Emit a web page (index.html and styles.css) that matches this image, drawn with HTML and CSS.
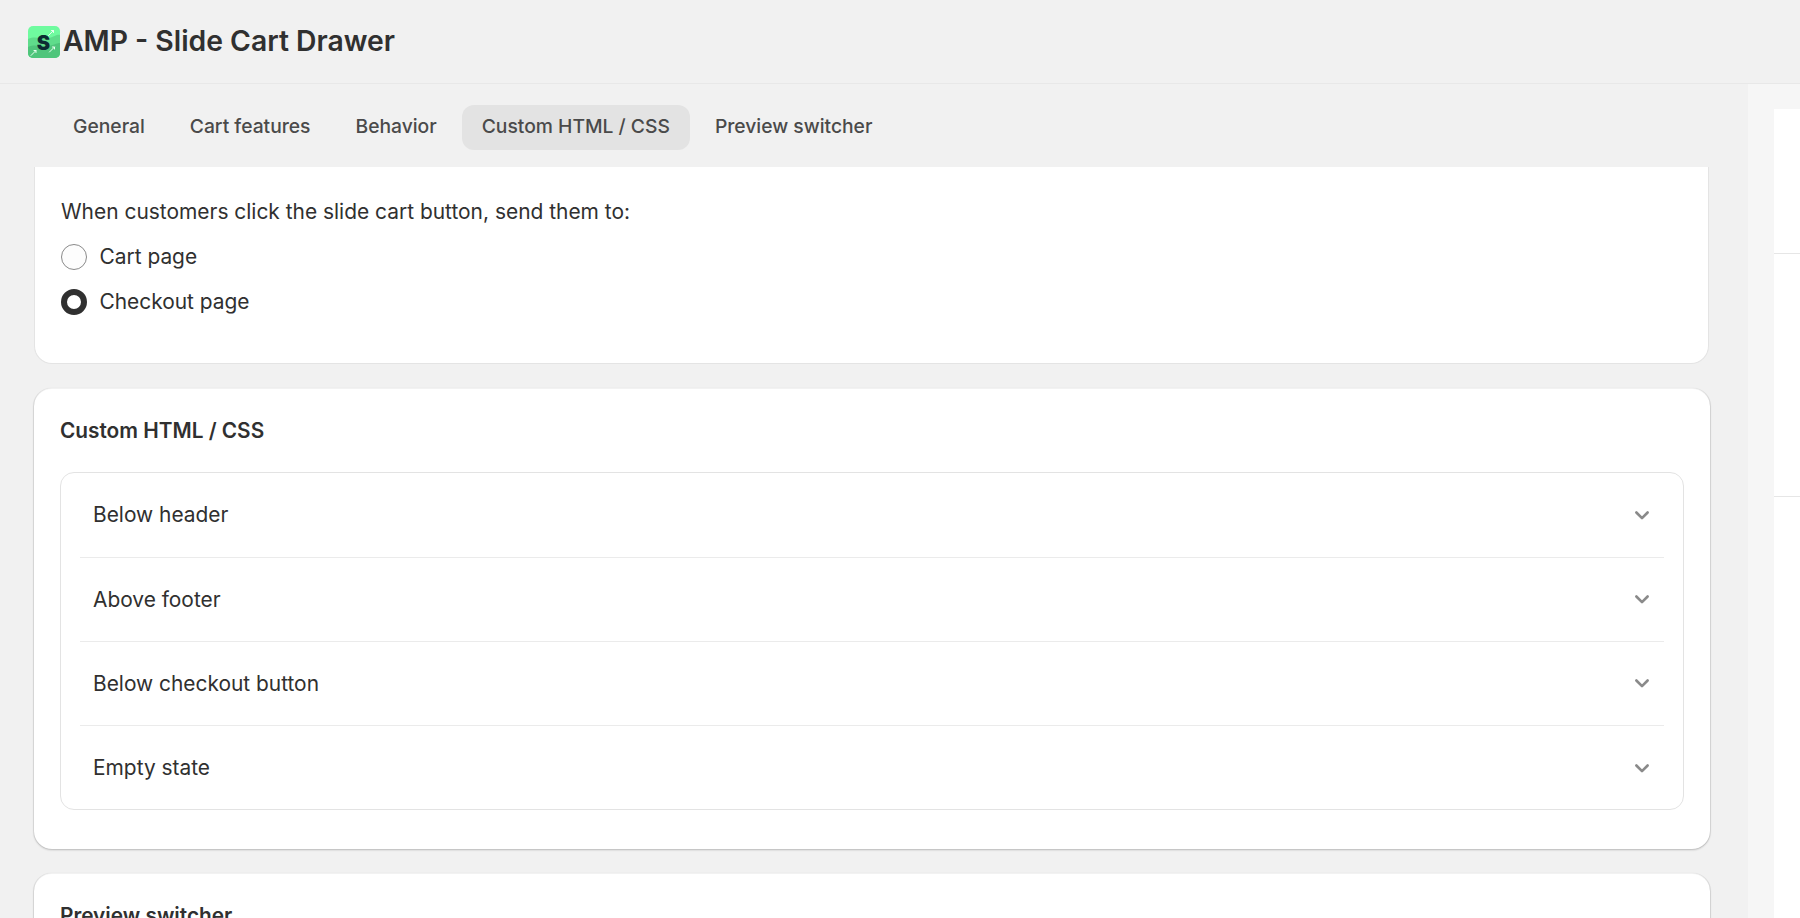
FILE: index.html
```html
<!DOCTYPE html>
<html lang="en">
<head>
<meta charset="utf-8">
<title>AMP - Slide Cart Drawer</title>
<link rel="stylesheet" href="styles.css">
</head>
<body>
<div class="app">
  <header class="topbar">
    <svg class="logo" viewBox="0 0 32 32" aria-hidden="true">
      <defs><clipPath id="lc"><rect width="32" height="32" rx="5"/></clipPath></defs>
      <g clip-path="url(#lc)">
        <rect width="32" height="32" fill="#6ffb9f"/>
        <path d="M0 13 C8 9 14 14 21 12 S29 8 32 9 V32 H0Z" fill="#5fdc8b"/>
        <path d="M0 21 C8 17 14 22 21 20 S29 17 32 17 V32 H0Z" fill="#4fc57b"/>
        <g stroke="#e9fff0" stroke-width="1" fill="none" stroke-linecap="round">
          <path d="M20.5 9.5 L25.5 4.5 M23.5 4.5 H25.5 V6.5"/>
          <path d="M3 29.5 L8 24.5 M6 24.5 H8 V26.5"/>
          <path d="M21.5 26 L26.5 21 M24.5 21 H26.5 V23"/>
        </g>
      </g>
      <text class="logo-s" x="15.5" y="23.5" text-anchor="middle">S</text>
    </svg>
    <h1 class="title">AMP - Slide Cart Drawer</h1>
  </header>
  <div class="body-row">
    <main class="content">
      <nav class="tabs">
        <a class="tab">General</a>
        <a class="tab">Cart features</a>
        <a class="tab">Behavior</a>
        <a class="tab tab-active">Custom HTML / CSS</a>
        <a class="tab">Preview switcher</a>
      </nav>
      <div class="scroll">
        <section class="card card-cut">
          <p class="prompt">When customers click the slide cart button, send them to:</p>
          <label class="radio-row"><span class="radio"></span>Cart page</label>
          <label class="radio-row"><span class="radio radio-on"></span>Checkout page</label>
        </section>
        <section class="card card-main card-html">
          <h2 class="card-title">Custom HTML / CSS</h2>
          <div class="accordion">
            <div class="acc-row"><span>Below header</span><svg class="chev" viewBox="0 0 16 16"><path d="M3.5 6 8 10.5 12.5 6"/></svg></div>
            <div class="acc-row"><span>Above footer</span><svg class="chev" viewBox="0 0 16 16"><path d="M3.5 6 8 10.5 12.5 6"/></svg></div>
            <div class="acc-row"><span>Below checkout button</span><svg class="chev" viewBox="0 0 16 16"><path d="M3.5 6 8 10.5 12.5 6"/></svg></div>
            <div class="acc-row"><span>Empty state</span><svg class="chev" viewBox="0 0 16 16"><path d="M3.5 6 8 10.5 12.5 6"/></svg></div>
          </div>
        </section>
        <section class="card card-main card-preview">
          <h2 class="card-title">Preview switcher</h2>
        </section>
      </div>
    </main>
    <aside class="side">
      <div class="side-panel">
        <div class="side-block side-a"></div>
        <div class="side-block side-b"></div>
        <div class="side-block"></div>
      </div>
    </aside>
  </div>
</div>
</body>
</html>
```
FILE: styles.css
```css
* { box-sizing: border-box; }
html, body { height: 100%; margin: 0; }
body {
  font-family: Inter, "Liberation Sans", sans-serif;
  color: #303030;
  background: #f1f1f1;
  overflow: hidden;
}
.app { display: flex; flex-direction: column; height: 918px; }
.topbar {
  height: 84px;
  flex: none;
  display: flex;
  align-items: center;
  gap: 3px;
  padding: 0 0 0 28px;
  border-bottom: 1px solid #e8e8e8;
  background: #f1f1f1;
}
.logo { width: 32px; height: 32px; flex: none; display: block; }
.logo-s { font: 900 20px Inter, sans-serif; fill: #0c2b33; }
.title { margin: 0 0 2px; font-size: 28.3px; line-height: 36px; font-weight: 600; color: #303030; }
.body-row { flex: 1; display: flex; min-height: 0; }
.content { width: 1748px; flex: none; display: flex; flex-direction: column; min-height: 0; }
.tabs { flex: none; height: 83px; display: flex; gap: 5px; align-items: flex-start; padding: 21px 0 0 53px; }
.tab {
  height: 45px;
  padding: 0 20px 4px;
  display: flex;
  align-items: center;
  border-radius: 12px;
  font-size: 19.27px;
  font-weight: 500;
  color: #4a4a4a;
}
.tab-active { background: #e3e3e3; }
.scroll { flex: 1; min-height: 0; overflow: hidden; padding: 0 38px 0 34px; display: flex; flex-direction: column; gap: 24px; }
.card { background: #fff; flex: none; }
.card-cut {
  height: 197px;
  margin: 0 1px 0 0;
  padding: 33px 26px 0;
  border-radius: 0 0 18px 18px;
  border: 1px solid #e4e4e4;
  border-top: none;
}
.prompt { margin: 0 0 20px; font-size: 20.93px; line-height: 24px; color: #303030; }
.radio-row { display: flex; align-items: center; gap: 12.5px; height: 26px; margin-bottom: 19px; font-size: 20.9px; line-height: 24px; }
.radio { width: 26px; height: 26px; border-radius: 50%; border: 1px solid #8a8a8a; background: #fdfdfd; flex: none; }
.radio-on { border: 6.5px solid #303030; background: #fff; }
.card-main {
  border-radius: 18px;
  padding: 30px 26px 38px;
  box-shadow: 0 1px 2px rgba(0,0,0,.24), 1px 0 0 rgba(0,0,0,.06), -1px 0 0 rgba(0,0,0,.05), inset 0 1px 0 rgba(0,0,0,.05);
}
.card-html { height: 461px; }
.card-preview { height: 200px; }
.card-title { margin: 0 0 28px; font-size: 20.8px; line-height: 26px; font-weight: 600; color: #303030; }
.accordion { border: 1px solid #e3e3e3; border-radius: 14px; padding: 0 19px; }
.acc-row {
  height: 84px;
  display: flex;
  align-items: center;
  justify-content: space-between;
  padding: 0 12px 1px 13px;
  border-bottom: 1px solid #ebebeb;
  font-size: 20.9px;
}
.acc-row:first-child { height: 85px; }
.acc-row:last-child { height: 83px; padding-bottom: 0; border-bottom: none; }
.chev { width: 20px; height: 20px; flex: none; }
.chev path { fill: none; stroke: #8a8a8a; stroke-width: 2.1; stroke-linecap: round; stroke-linejoin: round; }
.side { flex: 1; background: #f6f6f6; padding: 25px 0 0 26px; min-width: 0; }
.side-panel { background: #fff; height: 100%; }
.side-block { border-bottom: 1px solid #e6e6e6; }
.side-a { height: 145px; }
.side-b { height: 243px; }
.side-block:last-child { border-bottom: none; }
```
